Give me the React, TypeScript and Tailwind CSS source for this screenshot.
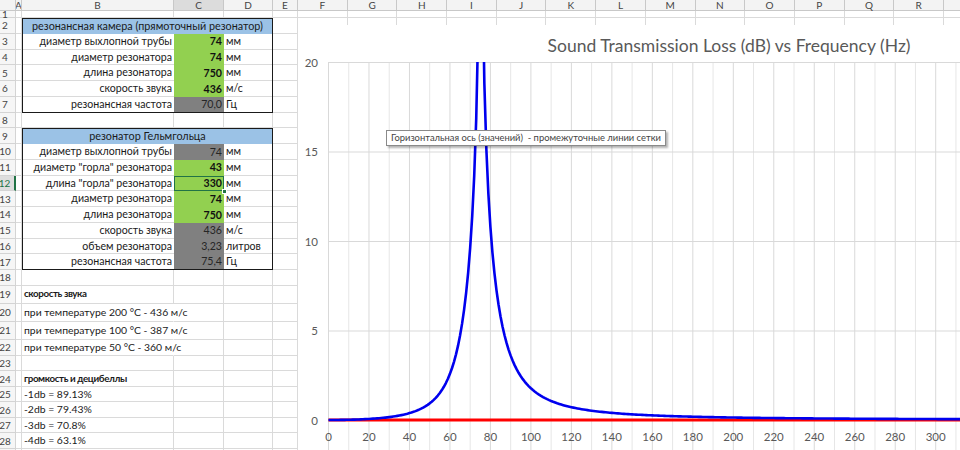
import React from 'react';

const FCOLS = ['F', 'G', 'H', 'I', 'J', 'K', 'L', 'M', 'N', 'O', 'P', 'Q', 'R', 'S'];

const X0 = 30.5;
const SX = 2.024;
const Y0 = 395;
const SY = 17.9;
const px = (f: number) => X0 + f * SX;
const py = (v: number) => Y0 - v * SY;

function tl(f: number) {
  if (f <= 0) return 0;
  const r = f / 75.2 - 75.2 / f;
  const v = 0.41 / r;
  return 10 * Math.log10(1 + v * v);
}

const bluePts = Array.from({ length: 420 }, (_, i) => i)
  .map((f) => `${px(f).toFixed(2)},${py(Math.min(tl(f), 40)).toFixed(2)}`)
  .join(' ');

function RowHdr({ n, sel }: { n?: number; sel?: boolean }) {
  return (
    <div
      className={
        sel
          ? 'w-[16px] shrink-0 flex items-center justify-center pr-[5px] bg-[#dedede] border-b border-[#d4d4d4] border-r-2 border-r-[#217346] text-[#217346]'
          : 'w-[16px] shrink-0 flex items-center justify-center pr-[5px] bg-[#f6f6f6] border-b border-r border-[#d4d4d4] text-[#444]'
      }
    >
      <span className="text-[10px] leading-none">{n}</span>
    </div>
  );
}

function Rest() {
  return (
    <>
      <div className="w-[25px] shrink-0 border-r border-b border-[#dadada]" />
      {FCOLS.map((c) => (
        <div key={c} className="w-[49.7px] shrink-0 border-r border-b border-[#dadada]" />
      ))}
    </>
  );
}

function Row({ n, h, sel, children }: { n?: number; h: string; sel?: boolean; children?: React.ReactNode }) {
  return (
    <div className={`flex ${h}`}>
      <RowHdr n={n} sel={sel} />
      <div className="w-[6px] shrink-0 border-r border-b border-[#dadada]" />
      {children}
      <Rest />
    </div>
  );
}

function EmptyBCD() {
  return (
    <>
      <div className="w-[152px] shrink-0 border-r border-b border-[#dadada]" />
      <div className="w-[50px] shrink-0 border-r border-b border-[#dadada]" />
      <div className="w-[49px] shrink-0 border-r border-b border-[#dadada]" />
    </>
  );
}

function TblHead({ text }: { text: string }) {
  return (
    <div className="w-[251px] shrink-0 flex border-t-[1.5px] border-x-[1.5px] border-[#1a1a1a] bg-[#9bc2e6]">
      <div className="flex-1 flex items-center justify-center text-[10.8px] text-[#1a1a1a]">{text}</div>
    </div>
  );
}

function TblRow({
  label,
  value,
  unit,
  green,
  last,
  sel,
}: {
  label: string;
  value: string;
  unit: string;
  green?: boolean;
  last?: boolean;
  sel?: boolean;
}) {
  return (
    <div
      className={
        last
          ? 'w-[251px] shrink-0 flex border-x-[1.5px] border-b-[1.5px] border-[#1a1a1a]'
          : 'w-[251px] shrink-0 flex border-x-[1.5px] border-[#1a1a1a]'
      }
    >
      <div
        className={
          last
            ? 'w-[150.5px] shrink-0 flex items-center justify-end pr-[1.5px] text-[#1a1a1a] whitespace-nowrap'
            : 'w-[150.5px] shrink-0 flex items-center justify-end pr-[1.5px] text-[#1a1a1a] whitespace-nowrap border-b border-[#dadada]'
        }
      >
        {label}
      </div>
      <div
        className={
          green
            ? 'relative w-[50px] shrink-0 flex items-center justify-end pr-[1.5px] bg-[#92d050] font-bold text-[#111]'
            : 'relative w-[50px] shrink-0 flex items-center justify-end pr-[1.5px] bg-[#808080] text-[#262626]'
        }
      >
        {value}
        {sel && (
          <>
            <div className="absolute inset-0 border-[1.5px] border-[#217346]" />
            <div className="absolute right-[-3px] bottom-[-3px] z-10 w-[5px] h-[5px] bg-[#217346] border border-white" />
          </>
        )}
      </div>
      <div
        className={
          last
            ? 'flex-1 flex items-center pl-[2.5px] text-[#1a1a1a]'
            : 'flex-1 flex items-center pl-[2.5px] text-[#1a1a1a] border-b border-[#dadada]'
        }
      >
        {unit}
      </div>
    </div>
  );
}

function TextBCD({ text, bold, over }: { text: string; bold?: boolean; over?: boolean }) {
  return (
    <>
      <div
        className={
          (over
            ? 'w-[152px] shrink-0 border-b border-r border-[#dadada] border-r-transparent '
            : 'w-[152px] shrink-0 border-b border-r border-[#dadada] ') +
          (bold
            ? 'flex items-center pl-[2px] whitespace-nowrap text-[9.8px] tracking-[-0.4px] font-bold text-[#1a1a1a]'
            : 'flex items-center pl-[2px] whitespace-nowrap text-[10.4px] text-[#1a1a1a]')
        }
      >
        {text}
      </div>
      <div className="w-[50px] shrink-0 border-r border-b border-[#dadada]" />
      <div className="w-[49px] shrink-0 border-r border-b border-[#dadada]" />
    </>
  );
}

function ColHeader() {
  return (
    <div className="flex h-[11px] text-[10px] leading-none text-[#444]">
      <div className="w-[16px] shrink-0 bg-[#f3f3f3] border-r border-b border-[#c8c8c8]" />
      <div className="w-[6px] shrink-0 bg-[#f3f3f3] border-r border-b border-[#c8c8c8] flex items-center justify-center overflow-hidden">
        A
      </div>
      <div className="w-[152px] shrink-0 bg-[#f3f3f3] border-r border-b border-[#c8c8c8] flex items-center justify-center">B</div>
      <div className="w-[50px] shrink-0 bg-[#dcdcdc] border-r border-b border-[#c8c8c8] flex items-center justify-center">C</div>
      <div className="w-[49px] shrink-0 bg-[#f3f3f3] border-r border-b border-[#c8c8c8] flex items-center justify-center">D</div>
      <div className="w-[25px] shrink-0 bg-[#f3f3f3] border-r border-b border-[#c8c8c8] flex items-center justify-center">E</div>
      {FCOLS.map((c) => (
        <div key={c} className="w-[49.7px] shrink-0 bg-[#f3f3f3] border-r border-b border-[#c8c8c8] flex items-center justify-center">
          {c === 'S' ? '' : c}
        </div>
      ))}
    </div>
  );
}

function Chart() {
  const W = 862;
  const H = 425;
  const vlines = Array.from({ length: 42 }, (_, k) => k);
  const xl = Array.from({ length: 16 }, (_, k) => k * 20);
  return (
    <div className="absolute left-[298px] top-[25px] w-[862px] h-[425px] bg-white">
      <svg className="absolute inset-0" width={W} height={H}>
        <defs>
          <clipPath id="plotclip">
            <rect x={0} y={py(20)} width={W} height={H} />
          </clipPath>
        </defs>
        {vlines.map((k) => (
          <line
            key={k}
            x1={px(k * 10)}
            x2={px(k * 10)}
            y1={py(20)}
            y2={H}
            stroke={k % 2 === 0 ? '#d9d9d9' : '#e6e6e6'}
            strokeWidth={1}
          />
        ))}
        {[5, 10, 15, 20].map((v) => (
          <line key={v} x1={X0} x2={W} y1={py(v) + 0.5} y2={py(v) + 0.5} stroke="#d9d9d9" strokeWidth={1} />
        ))}
        <line x1={X0} x2={W} y1={Y0} y2={Y0} stroke="#d9d9d9" strokeWidth={1} />
        <line x1={X0} x2={W} y1={Y0} y2={Y0} stroke="#ff0000" strokeWidth={3} />
        <polyline points={bluePts} fill="none" stroke="#0000ee" strokeWidth={2.6} strokeLinejoin="round" clipPath="url(#plotclip)" />
        {[0, 5, 10, 15, 20].map((v) => (
          <text key={v} x={20} y={py(v)} textAnchor="end" dominantBaseline="central" fontSize={11.5} fill="#595959">
            {v}
          </text>
        ))}
        {xl.map((f) => (
          <text key={f} x={px(f)} y={411} textAnchor="middle" dominantBaseline="central" fontSize={11.5} fill="#595959">
            {f}
          </text>
        ))}
      </svg>
      <div className="relative h-[42px] flex items-center justify-center text-[17.5px] text-[#595959]">
        Sound Transmission Loss (dB) vs Frequency (Hz)
      </div>
      <div className="absolute left-[88px] top-[105px] h-[16px] px-[4px] flex items-center bg-white border border-[#8a8a8a] shadow-[2px_2px_2px_rgba(0,0,0,0.3)] text-[9.4px] text-[#444] whitespace-pre">
        Горизонтальная ось (значений)  - промежуточные линии сетки
      </div>
    </div>
  );
}

export default function App() {
  const H = 'h-[15.75px]';
  return (
    <div className="relative w-[960px] h-[450px] overflow-hidden bg-white font-['Lato','Noto_Sans',sans-serif] text-[10.6px] leading-none">
      <ColHeader />
      <Row n={1} h="h-[7px]">
        <EmptyBCD />
      </Row>
      <Row n={2} h={H}>
        <TblHead text="резонансная камера (прямоточный резонатор)" />
      </Row>
      <Row n={3} h={H}>
        <TblRow label="диаметр выхлопной трубы" value="74" unit="мм" green />
      </Row>
      <Row n={4} h={H}>
        <TblRow label="диаметр резонатора" value="74" unit="мм" green />
      </Row>
      <Row n={5} h={H}>
        <TblRow label="длина резонатора" value="750" unit="мм" green />
      </Row>
      <Row n={6} h={H}>
        <TblRow label="скорость звука" value="436" unit="м/с" green />
      </Row>
      <Row n={7} h={H}>
        <TblRow label="резонансная частота" value="70,0" unit="Гц" last />
      </Row>
      <Row n={8} h={H}>
        <EmptyBCD />
      </Row>
      <Row n={9} h={H}>
        <TblHead text="резонатор Гельмгольца" />
      </Row>
      <Row n={10} h={H}>
        <TblRow label="диаметр выхлопной трубы" value="74" unit="мм" />
      </Row>
      <Row n={11} h={H}>
        <TblRow label='диаметр "горла" резонатора' value="43" unit="мм" green />
      </Row>
      <Row n={12} h={H} sel>
        <TblRow label='длина "горла" резонатора' value="330" unit="мм" green sel />
      </Row>
      <Row n={13} h={H}>
        <TblRow label="диаметр резонатора" value="74" unit="мм" green />
      </Row>
      <Row n={14} h={H}>
        <TblRow label="длина резонатора" value="750" unit="мм" green />
      </Row>
      <Row n={15} h={H}>
        <TblRow label="скорость звука" value="436" unit="м/с" />
      </Row>
      <Row n={16} h={H}>
        <TblRow label="объем резонатора" value="3,23" unit="литров" />
      </Row>
      <Row n={17} h={H}>
        <TblRow label="резонансная частота" value="75,4" unit="Гц" last />
      </Row>
      <Row n={18} h={H}>
        <EmptyBCD />
      </Row>
      <Row n={19} h="h-[18px]">
        <TextBCD text="скорость звука" bold />
      </Row>
      <Row n={20} h="h-[18px]">
        <TextBCD text="при температуре 200 °C - 436 м/с" over />
      </Row>
      <Row n={21} h="h-[18px]">
        <TextBCD text="при температуре 100 °C - 387 м/с" over />
      </Row>
      <Row n={22} h="h-[16px]">
        <TextBCD text="при температуре 50 °C - 360 м/с" over />
      </Row>
      <Row n={23} h="h-[15.5px]">
        <EmptyBCD />
      </Row>
      <Row n={24} h="h-[15.5px]">
        <TextBCD text="громкость и децибеллы" bold />
      </Row>
      <Row n={25} h="h-[15.5px]">
        <TextBCD text="-1db = 89.13%" />
      </Row>
      <Row n={26} h="h-[15.5px]">
        <TextBCD text="-2db = 79.43%" />
      </Row>
      <Row n={27} h="h-[15.5px]">
        <TextBCD text="-3db = 70.8%" />
      </Row>
      <Row n={28} h="h-[15.5px]">
        <TextBCD text="-4db = 63.1%" />
      </Row>
      <Row h="h-[15.5px]">
        <EmptyBCD />
      </Row>
      <Chart />
    </div>
  );
}
